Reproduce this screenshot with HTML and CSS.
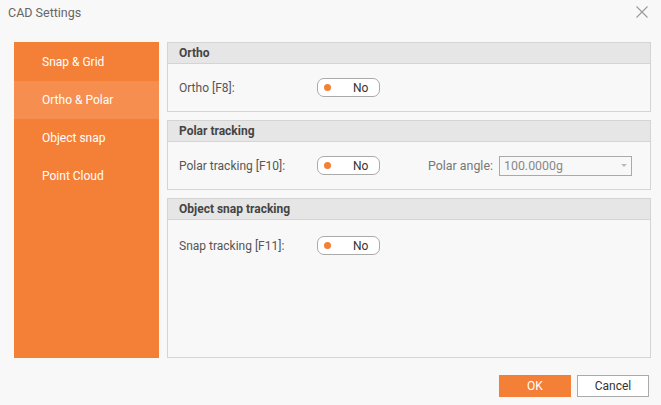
FILE: index.html
```html
<!DOCTYPE html>
<html lang="en">
<head>
<meta charset="UTF-8">
<title>CAD Settings</title>
<link rel="stylesheet" href="styles.css">
</head>
<body>
<div class="dialog">
  <div class="titlebar">
    <span class="title">CAD Settings</span>
    <svg class="close" width="12" height="12" viewBox="0 0 12 12"><path d="M0.5 0.5L11.5 11.5M11.5 0.5L0.5 11.5" stroke="#9a9a9a" stroke-width="1.1" fill="none"/></svg>
  </div>
  <div class="main">
    <div class="sidebar">
      <div class="nav-item">Snap &amp; Grid</div>
      <div class="nav-item active">Ortho &amp; Polar</div>
      <div class="nav-item">Object snap</div>
      <div class="nav-item">Point Cloud</div>
    </div>
    <div class="content">
      <div class="group">
        <div class="group-head">Ortho</div>
        <div class="group-body">
          <div class="row">
            <span class="label">Ortho [F8]:</span>
            <span class="toggle"><span class="dot"></span><span class="val">No</span></span>
          </div>
        </div>
      </div>
      <div class="group">
        <div class="group-head">Polar tracking</div>
        <div class="group-body">
          <div class="row">
            <span class="label">Polar tracking [F10]:</span>
            <span class="toggle"><span class="dot"></span><span class="val">No</span></span>
            <span class="angle-label">Polar angle:</span>
            <span class="select">100.0000g<span class="arrow"></span></span>
          </div>
        </div>
      </div>
      <div class="group grow">
        <div class="group-head">Object snap tracking</div>
        <div class="group-body top">
          <div class="row">
            <span class="label">Snap tracking [F11]:</span>
            <span class="toggle"><span class="dot"></span><span class="val">No</span></span>
          </div>
        </div>
      </div>
    </div>
  </div>
  <div class="footer">
    <button class="btn ok">OK</button>
    <button class="btn">Cancel</button>
  </div>
</div>
</body>
</html>
```

FILE: styles.css
```css
body {
  margin: 0;
  background: #f8f8f8;
  font-family: Roboto, "Liberation Sans", sans-serif;
  font-size: 12px;
  color: #555;
}
.dialog {
  width: 661px;
  height: 405px;
  display: flex;
  flex-direction: column;
}
.titlebar {
  height: 24px;
  display: flex;
  align-items: center;
  justify-content: space-between;
  padding: 0 13px 0 8px;
}
.title {
  color: #666;
  font-size: 12.5px;
}
.main {
  display: flex;
  gap: 8px;
  padding: 18px 10px 0 14px;
  height: 316px;
}
.sidebar {
  width: 145px;
  background: #f48037;
  padding-top: 1px;
}
.nav-item {
  height: 38px;
  line-height: 38px;
  padding-left: 28px;
  color: #fff;
  font-size: 12px;
}
.nav-item.active {
  background: #f58e4e;
}
.content {
  flex: 1;
  display: flex;
  flex-direction: column;
  gap: 8px;
}
.group {
  border: 1px solid #d4d4d4;
  height: 70px;
  display: flex;
  flex-direction: column;
  box-sizing: border-box;
}
.group.grow {
  flex: 1;
}
.group-head {
  height: 20px;
  line-height: 20px;
  background: #e6e6e6;
  border-bottom: 1px solid #d4d4d4;
  padding-left: 11px;
  font-weight: bold;
  color: #444;
}
.group-body {
  flex: 1;
  display: flex;
  align-items: center;
  padding-left: 11px;
}
.group-body.top {
  align-items: flex-start;
  padding-top: 16px;
}
.row {
  display: flex;
  align-items: center;
}
.label {
  width: 138px;
}
.toggle {
  width: 61px;
  height: 17px;
  border: 1px solid #aaa;
  border-radius: 7px;
  background: #fff;
  display: flex;
  align-items: center;
}
.dot {
  width: 7px;
  height: 7px;
  border-radius: 50%;
  background: #f48037;
  margin-left: 6px;
}
.val {
  margin-left: 22px;
  color: #333;
}
.angle-label {
  margin-left: 48px;
  color: #777;
  font-size: 12.4px;
}
.select {
  margin-left: 6px;
  width: 123px;
  height: 18px;
  border: 1px solid #aaa;
  background: #f8f8f8;
  color: #888;
  display: flex;
  align-items: center;
  justify-content: space-between;
  padding: 0 4px;
  font-size: 12.4px;
}
.arrow {
  width: 0;
  height: 0;
  border-left: 3px solid transparent;
  border-right: 3px solid transparent;
  border-top: 3px solid #bbb;
}
.footer {
  display: flex;
  justify-content: flex-end;
  gap: 6px;
  padding: 17px 12px 0 0;
}
.btn {
  width: 72px;
  height: 22px;
  border: 1px solid #aaa;
  background: #fff;
  color: #333;
  font-family: Roboto, "Liberation Sans", sans-serif;
  font-size: 12px;
  padding: 0;
}
.btn.ok {
  background: #f48037;
  border-color: #f48037;
  color: #fff;
}
```
